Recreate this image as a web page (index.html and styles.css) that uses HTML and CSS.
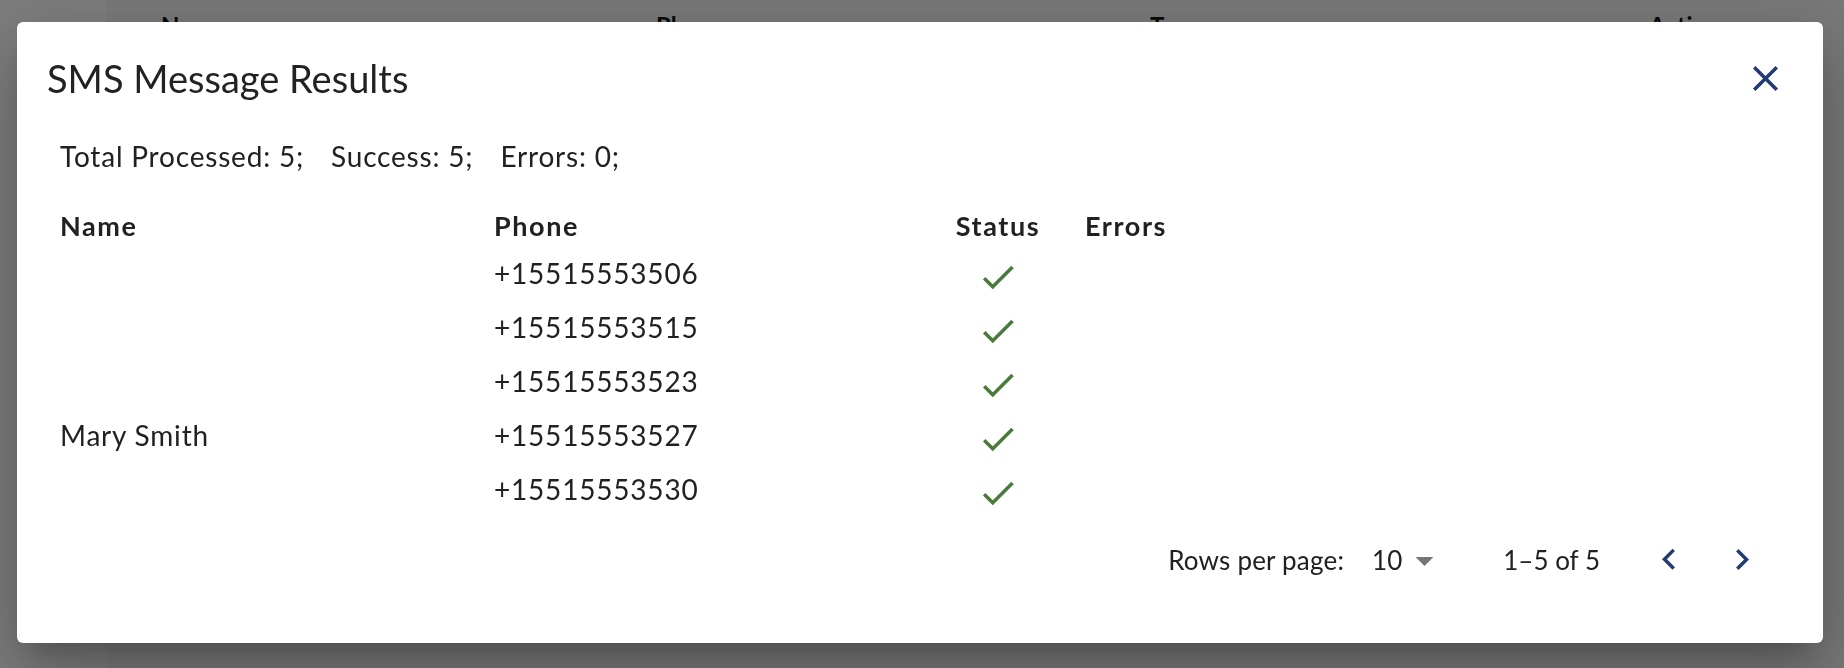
FILE: index.html
```html
<!DOCTYPE html>
<html lang="en">
<head>
  <meta charset="UTF-8" />
  <meta name="viewport" content="width=device-width, initial-scale=1.0" />
  <title>SMS Message Results</title>
  <link rel="stylesheet" href="styles.css">
</head>
<body>
  <!-- Page behind the dialog -->
  <div class="page">
    <div class="sidebar"></div>
    <div class="page-main">
      <div class="page-head">
        <span>Name</span>
        <span>Phone</span>
        <span>Type</span>
        <span>Actions</span>
      </div>
    </div>
  </div>

  <!-- Results dialog -->
  <div class="backdrop">
    <div class="dialog">
      <div class="dialog-title">
        <h2>SMS Message Results</h2>
        <button class="icon-btn close-btn" aria-label="Close">
          <svg viewBox="0 0 24 24" width="43" height="43"><path d="M19 6.41 17.59 5 12 10.59 6.41 5 5 6.41 10.59 12 5 17.59 6.41 19 12 13.41 17.59 19 19 17.59 13.41 12z"/></svg>
        </button>
      </div>

      <div class="dialog-body">
        <p class="summary">
          <span>Total Processed: 5;</span>
          <span>Success: 5;</span>
          <span>Errors: 0;</span>
        </p>

        <div class="results">
          <div class="row head">
            <div>Name</div>
            <div>Phone</div>
            <div class="status">Status</div>
            <div>Errors</div>
          </div>
          <div class="row">
            <div></div>
            <div>+15515553506</div>
            <div class="status"><svg class="check" viewBox="0 0 24 24" width="42" height="42"><path d="M9 16.17 4.83 12l-1.42 1.41L9 19 21 7l-1.41-1.41z"/></svg></div>
            <div></div>
          </div>
          <div class="row">
            <div></div>
            <div>+15515553515</div>
            <div class="status"><svg class="check" viewBox="0 0 24 24" width="42" height="42"><path d="M9 16.17 4.83 12l-1.42 1.41L9 19 21 7l-1.41-1.41z"/></svg></div>
            <div></div>
          </div>
          <div class="row">
            <div></div>
            <div>+15515553523</div>
            <div class="status"><svg class="check" viewBox="0 0 24 24" width="42" height="42"><path d="M9 16.17 4.83 12l-1.42 1.41L9 19 21 7l-1.41-1.41z"/></svg></div>
            <div></div>
          </div>
          <div class="row">
            <div>Mary Smith</div>
            <div>+15515553527</div>
            <div class="status"><svg class="check" viewBox="0 0 24 24" width="42" height="42"><path d="M9 16.17 4.83 12l-1.42 1.41L9 19 21 7l-1.41-1.41z"/></svg></div>
            <div></div>
          </div>
          <div class="row">
            <div></div>
            <div>+15515553530</div>
            <div class="status"><svg class="check" viewBox="0 0 24 24" width="42" height="42"><path d="M9 16.17 4.83 12l-1.42 1.41L9 19 21 7l-1.41-1.41z"/></svg></div>
            <div></div>
          </div>
        </div>

        <div class="pager">
          <span class="pager-label">Rows per page:</span>
          <span class="pager-select">10<svg viewBox="0 0 24 24" width="43" height="43"><path d="M7 10l5 5 5-5z"/></svg></span>
          <span class="pager-count">1–5 of 5</span>
          <button class="icon-btn nav-btn" aria-label="Previous page">
            <svg viewBox="0 0 24 24" width="44" height="44"><path d="M15.41 16.09l-4.58-4.59 4.58-4.59L14 5.5l-6 6 6 6z"/></svg>
          </button>
          <button class="icon-btn nav-btn next" aria-label="Next page">
            <svg viewBox="0 0 24 24" width="44" height="44"><path d="M8.59 16.34l4.58-4.59-4.58-4.59L10 5.75l6 6-6 6z"/></svg>
          </button>
        </div>
      </div>
    </div>
  </div>
</body>
</html>
```

FILE: styles.css
```css
* { box-sizing: border-box; margin: 0; padding: 0; }
body { font-family: "Lato", "Noto Sans", sans-serif; color: #212121; width: 1844px; height: 668px; overflow: hidden; }

/* page behind */
.page { display: flex; height: 668px; background: #f2f2f2; }
.sidebar { width: 107px; background: #fafafa; }
.page-main { flex: 1; }
.page-head { display: grid; grid-template-columns: 495px 494px 499px 1fr; padding: 11px 0 0 54px; font-size: 24px; line-height: 30px; font-weight: 700; color: #111; }

/* dialog */
.backdrop { position: fixed; inset: 0; background: rgba(0, 0, 0, 0.5); display: flex; align-items: flex-start; padding: 22px 21px 0 17px; }
.dialog { flex: 1; background: #fff; border-radius: 6px; box-shadow: 0 18px 26px -12px rgba(0,0,0,0.2), 0 40px 64px 5px rgba(0,0,0,0.14), 0 15px 78px 14px rgba(0,0,0,0.12); padding: 28px 0 51px 0; }

.dialog-title { display: flex; align-items: center; justify-content: space-between; height: 56px; padding: 0 36px 0 30px; }
.dialog-title h2 { font-size: 38px; font-weight: 400; line-height: 56px; color: #222; }

.icon-btn { background: none; border: none; display: flex; align-items: center; justify-content: center; cursor: pointer; }
.icon-btn svg { fill: #233b70; display: block; }

.dialog-body { padding: 0 0 0 43px; }

.summary { display: flex; gap: 27px; margin-top: 30px; font-size: 28px; line-height: 40px; letter-spacing: 0.8px; }

.results { margin-top: 28px; }
.row { display: grid; grid-template-columns: 434px 417px 174px 1fr; align-items: center; height: 54px; font-size: 28px; letter-spacing: 0.8px; }
.row.head { height: 42px; font-size: 27px; font-weight: 700; letter-spacing: 1.6px; }
.row .status { display: flex; justify-content: center; }
.check { fill: #4b7a3d; display: block; margin-top: 8px; }

.pager { display: flex; align-items: center; justify-content: flex-end; height: 64px; margin-top: 12px; padding-right: 60px; font-size: 26px; }
.pager-label { margin-right: 28px; letter-spacing: 0.2px; }
.pager-select { display: flex; align-items: center; }
.pager-select svg { fill: #757575; display: block; margin-left: 1px; }
.pager-count { margin-left: 57px; margin-right: 48px; }
.nav-btn { width: 42px; height: 42px; }
.nav-btn.next { margin-left: 31px; }
```
